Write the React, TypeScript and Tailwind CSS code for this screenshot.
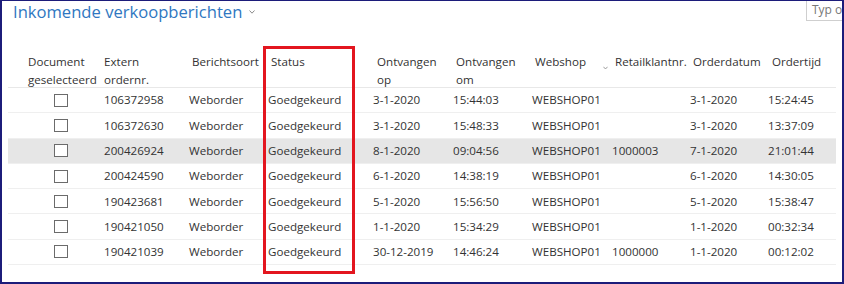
import React from 'react';

type Order = {
  extern: string;
  retail: string;
  ontvangenOp: string;
  ontvangenOm: string;
  orderdatum: string;
  ordertijd: string;
  selected?: boolean;
};

const orders: Order[] = [
  { extern: '106372958', retail: '', ontvangenOp: '3-1-2020', ontvangenOm: '15:44:03', orderdatum: '3-1-2020', ordertijd: '15:24:45' },
  { extern: '106372630', retail: '', ontvangenOp: '3-1-2020', ontvangenOm: '15:48:33', orderdatum: '3-1-2020', ordertijd: '13:37:09' },
  { extern: '200426924', retail: '1000003', ontvangenOp: '8-1-2020', ontvangenOm: '09:04:56', orderdatum: '7-1-2020', ordertijd: '21:01:44', selected: true },
  { extern: '200424590', retail: '', ontvangenOp: '6-1-2020', ontvangenOm: '14:38:19', orderdatum: '6-1-2020', ordertijd: '14:30:05' },
  { extern: '190423681', retail: '', ontvangenOp: '5-1-2020', ontvangenOm: '15:56:50', orderdatum: '5-1-2020', ordertijd: '15:38:47' },
  { extern: '190421050', retail: '', ontvangenOp: '1-1-2020', ontvangenOm: '15:34:29', orderdatum: '1-1-2020', ordertijd: '00:32:34' },
  { extern: '190421039', retail: '1000000', ontvangenOp: '30-12-2019', ontvangenOm: '14:46:24', orderdatum: '1-1-2020', ordertijd: '00:12:02' },
];

const cols = 'grid grid-cols-[92px_85px_79px_105px_80px_79px_80px_78px_78px_72px]';

const Caret = ({ className }: { className?: string }) => (
  <svg width="6" height="4" viewBox="0 0 6 4" className={className}>
    <path d="M0.5 0.5 L3 3.2 L5.5 0.5" fill="none" stroke="#8a8a8a" strokeWidth="1" />
  </svg>
);

export default function App() {
  return (
    <div
      className="relative w-[844px] h-[284px] overflow-hidden bg-white border-2 border-t border-[#1c1c7a] text-[#333] text-[11.6px]"
      style={{ fontFamily: '"Open Sans", "Noto Sans", sans-serif' }}
    >
      <div className="flex items-start h-[44px]">
        <h1 className="ml-[11px] mt-[-1px] text-[16.6px] leading-[24px] text-[#2f77c1]">Inkomende verkoopberichten</h1>
        <Caret className="ml-[7px] mt-[9px]" />
        <div className="ml-auto mr-[-22px] w-[58px] h-[20px] overflow-hidden whitespace-nowrap border border-[#cfcfcf] border-t-0 pl-[5px] leading-[18px] text-[12px] text-[#777]">
          Typ om te zoeken
        </div>
      </div>

      <div className="ml-[6px] w-[828px]">
        <div className={`${cols} h-[43px] pt-[8px] leading-[18px] border-b border-[#e8e8e8]`}>
          <div className="pl-[20px]">Document<br />geselecteerd</div>
          <div className="pl-[4px]">Extern<br />ordernr.</div>
          <div className="pl-[7px]">Berichtsoort</div>
          <div className="pl-[7px]">Status</div>
          <div className="pl-[8px]">Ontvangen<br />op</div>
          <div className="pl-[7px]">Ontvangen<br />om</div>
          <div className="pl-[7px] flex">
            <span>Webshop</span>
            <Caret className="ml-[17px] mt-[13px]" />
          </div>
          <div className="pl-[7px]">Retailklantnr.</div>
          <div className="pl-[7px]">Orderdatum</div>
          <div className="pl-[8px]">Ordertijd</div>
        </div>

        {orders.map((o) => (
          <div
            key={o.extern}
            className={`${cols} h-[25.3px] items-center border-b border-[#efefef] ${o.selected ? 'bg-[#e6e6e6]' : ''}`}
          >
            <div className="pl-[46px] flex">
              <span className="w-[14px] h-[13px] border border-[#6b6b6b] bg-white" />
            </div>
            <div className="pl-[4px]">{o.extern}</div>
            <div className="pl-[4px]">Weborder</div>
            <div className="pl-[4px]">Goedgekeurd</div>
            <div className="pl-[4px]">{o.ontvangenOp}</div>
            <div className="pl-[4px]">{o.ontvangenOm}</div>
            <div className="pl-[4px]">WEBSHOP01</div>
            <div className="pl-[4px]">{o.retail}</div>
            <div className="pl-[4px]">{o.orderdatum}</div>
            <div className="pl-[4px]">{o.ordertijd}</div>
          </div>
        ))}
      </div>

      {/* red highlight around the Status column */}
      <div className="absolute left-[261px] top-[45px] w-[92px] h-[228px] border-[3px] border-[#e3161f] pointer-events-none" />
    </div>
  );
}
